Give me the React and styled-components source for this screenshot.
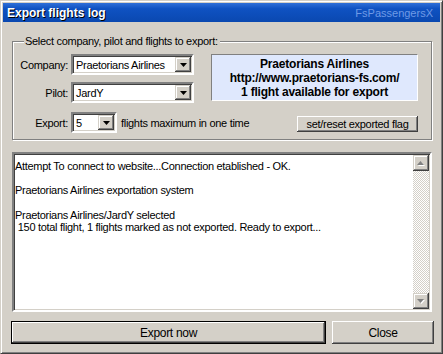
import styled, { createGlobalStyle } from "styled-components";

const GlobalStyle = createGlobalStyle`
    body {
        margin: 0;
        background: #d4d0c8;
        font-family: "Liberation Sans", Arial, sans-serif;
        font-size: 11px;
        color: #000;
    }
`;

const FACE = "#d4d0c8";

const Window = styled.div`
    width: 443px;
    height: 354px;
    box-sizing: border-box;
    background: ${FACE};
    border: 1px solid;
    border-color: ${FACE} #404040 #404040 ${FACE};
    box-shadow: inset 1px 1px #fff, inset -1px -1px #808080;
    padding: 2px;
    display: flex;
    flex-direction: column;
`;

const TitleBar = styled.div`
    height: 19px;
    flex-shrink: 0;
    display: flex;
    align-items: center;
    justify-content: space-between;
    padding: 0 7px 0 4px;
    background: linear-gradient(180deg, #2f6fd8 0%, #0f52c2 30%, #0a48b0 100%);
`;

const Title = styled.span`
    color: #fff;
    font-weight: bold;
    font-size: 12px;
    text-shadow: 1px 1px #000;
`;

const Brand = styled.span`
    color: #6f9ae6;
    font-size: 11px;
`;

const Body = styled.div`
    flex: 1;
    display: flex;
    flex-direction: column;
    padding: 13px 8px 0 9px;
`;

const Group = styled.fieldset`
    margin: 0;
    min-width: 0;
    flex-shrink: 0;
    padding: 7px 13px 6px 6px;
    border: 1px solid #808080;
    box-shadow: inset 1px 1px #fff, 1px 1px #fff;
`;

const Legend = styled.legend`
    padding: 0 2px 0 1px;
    margin-left: 5px;
    background: ${FACE};
    letter-spacing: -0.3px;
`;

const GroupTop = styled.div`
    display: flex;
    align-items: flex-start;
    gap: 17px;
`;

const Fields = styled.div`
    display: flex;
    flex-direction: column;
    gap: 7px;
`;

const FieldRow = styled.div`
    display: flex;
    align-items: center;
    gap: 3px;
`;

const Label = styled.span`
    width: 49px;
    text-align: right;
    letter-spacing: -0.3px;
`;

const Combo = styled.div`
    width: ${(p) => p.$w}px;
    height: 21px;
    box-sizing: border-box;
    display: flex;
    align-items: stretch;
    background: #fff;
    border: 2px solid;
    border-color: #808080 #fff #fff #808080;
    box-shadow: inset 1px 1px #404040, inset -1px -1px ${FACE};
    padding: 1px;
`;

const ComboValue = styled.span`
    flex: 1;
    display: flex;
    align-items: center;
    padding-left: 2px;
    letter-spacing: -0.3px;
`;

const DropButton = styled.span`
    width: 16px;
    display: flex;
    align-items: center;
    justify-content: center;
    background: ${FACE};
    box-shadow: inset -1px -1px #404040, inset 1px 1px ${FACE}, inset -2px -2px #808080, inset 2px 2px #fff;
`;

const InfoBox = styled.div`
    width: 207px;
    height: 47px;
    box-sizing: border-box;
    display: flex;
    flex-direction: column;
    justify-content: center;
    align-items: center;
    background: #dfe8fd;
    border: 1px solid;
    border-color: #808080 #fff #fff #808080;
    font-weight: bold;
    font-size: 12px;
    line-height: 14px;
    letter-spacing: -0.2px;
`;

const ExportRow = styled.div`
    display: flex;
    align-items: center;
    justify-content: space-between;
    margin-top: 9px;
`;

const Hint = styled.span`
    margin-left: 1px;
    letter-spacing: -0.3px;
`;

const RaisedButton = styled.button`
    font: inherit;
    color: #000;
    background: ${FACE};
    border: none;
    margin: 0;
    padding: 0;
    box-shadow: inset -1px -1px #404040, inset 1px 1px #fff, inset -2px -2px #808080, inset 2px 2px ${FACE};
    letter-spacing: -0.3px;
`;

const SmallButton = styled(RaisedButton)`
    width: 121px;
    height: 16px;
    margin-top: 3px;
    line-height: 14px;
`;

const LogBox = styled.div`
    margin-top: 12px;
    height: 160px;
    flex-shrink: 0;
    box-sizing: border-box;
    display: flex;
    background: #fff;
    border: 2px solid;
    border-color: #808080 #fff #fff #808080;
    box-shadow: inset 1px 1px #404040, inset -1px -1px ${FACE};
    padding: 1px;
`;

const LogText = styled.div`
    flex: 1;
    padding: 5px 0 3px;
    line-height: 12.2px;
    white-space: pre;
    letter-spacing: -0.3px;
`;

const ScrollBar = styled.div`
    width: 16px;
    display: flex;
    flex-direction: column;
    justify-content: space-between;
    background: repeating-conic-gradient(#fff 0 25%, ${FACE} 0 50%) 0 0 / 2px 2px;
`;

const ScrollButton = styled.span`
    height: 16px;
    display: flex;
    align-items: center;
    justify-content: center;
    background: ${FACE};
    box-shadow: inset -1px -1px #404040, inset 1px 1px ${FACE}, inset -2px -2px #808080, inset 2px 2px #fff;
`;

const Buttons = styled.div`
    display: flex;
    gap: 6px;
    margin: 9px -2px 0 -1px;
`;

const DialogButton = styled(RaisedButton)`
    height: 23px;
    font-size: 12px;
    ${(p) => (p.$grow ? "flex: 1;" : `width: ${p.$w}px;`)}
    ${(p) =>
        p.$default &&
        `
        border: 1px solid #000;
        box-shadow: inset -1px -1px #404040, inset 1px 1px #fff, inset -2px -2px #808080;
    `}
`;

function Arrow() {
    return (
        <svg width="7" height="4" viewBox="0 0 7 4">
            <path d="M0 0 L7 0 L3.5 4 Z" fill="#000" />
        </svg>
    );
}

function GrayArrow({ up }) {
    return (
        <svg width="8" height="5" viewBox="0 0 8 5">
            <path d={up ? "M4.5 1 L8 5 L1 5 Z" : "M1 1 L8 1 L4.5 5 Z"} fill="#fff" />
            <path d={up ? "M3.5 0 L7 4 L0 4 Z" : "M0 0 L7 0 L3.5 4 Z"} fill="#808080" />
        </svg>
    );
}

const log = `Attempt To connect to website...Connection etablished - OK.

Praetorians Airlines exportation system

Praetorians Airlines/JardY selected
 150 total flight, 1 flights marked as not exported. Ready to export...`;

export default function App() {
    return (
        <>
            <GlobalStyle />
            <Window>
                <TitleBar>
                    <Title>Export flights log</Title>
                    <Brand>FsPassengersX</Brand>
                </TitleBar>
                <Body>
                    <Group>
                        <Legend>Select company, pilot and flights to export:</Legend>
                        <GroupTop>
                            <Fields>
                                <FieldRow>
                                    <Label>Company:</Label>
                                    <Combo $w={123}>
                                        <ComboValue>Praetorians Airlines</ComboValue>
                                        <DropButton><Arrow /></DropButton>
                                    </Combo>
                                </FieldRow>
                                <FieldRow>
                                    <Label>Pilot:</Label>
                                    <Combo $w={123}>
                                        <ComboValue>JardY</ComboValue>
                                        <DropButton><Arrow /></DropButton>
                                    </Combo>
                                </FieldRow>
                            </Fields>
                            <InfoBox>
                                <span>Praetorians Airlines</span>
                                <span>http://www.praetorians-fs.com/</span>
                                <span>1 flight available for export</span>
                            </InfoBox>
                        </GroupTop>
                        <ExportRow>
                            <FieldRow>
                                <Label>Export:</Label>
                                <Combo $w={46}>
                                    <ComboValue>5</ComboValue>
                                    <DropButton><Arrow /></DropButton>
                                </Combo>
                                <Hint>flights maximum in one time</Hint>
                            </FieldRow>
                            <SmallButton>set/reset exported flag</SmallButton>
                        </ExportRow>
                    </Group>
                    <LogBox>
                        <LogText>{log}</LogText>
                        <ScrollBar>
                            <ScrollButton><GrayArrow up /></ScrollButton>
                            <ScrollButton><GrayArrow /></ScrollButton>
                        </ScrollBar>
                    </LogBox>
                    <Buttons>
                        <DialogButton $grow $default>Export now</DialogButton>
                        <DialogButton $w={102}>Close</DialogButton>
                    </Buttons>
                </Body>
            </Window>
        </>
    );
}
